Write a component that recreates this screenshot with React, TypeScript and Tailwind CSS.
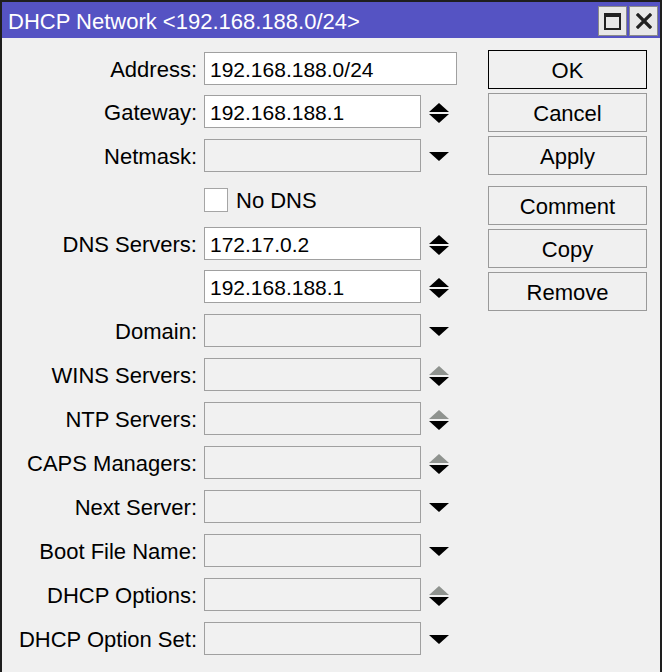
import React from "react";

type Arrow = "updown" | "down" | "greyup" | "none";

type Row =
  | { kind: "input"; label: string; value?: string; enabled: boolean; wide?: boolean; arrow: Arrow; h: number }
  | { kind: "check"; label: string; h: number };

const rows: Row[] = [
  { kind: "input", label: "Address:", value: "192.168.188.0/24", enabled: true, wide: true, arrow: "none", h: 43 },
  { kind: "input", label: "Gateway:", value: "192.168.188.1", enabled: true, arrow: "updown", h: 44 },
  { kind: "input", label: "Netmask:", enabled: false, arrow: "down", h: 44 },
  { kind: "check", label: "No DNS", h: 44 },
  { kind: "input", label: "DNS Servers:", value: "172.17.0.2", enabled: true, arrow: "updown", h: 43 },
  { kind: "input", label: "", value: "192.168.188.1", enabled: true, arrow: "updown", h: 44 },
  { kind: "input", label: "Domain:", enabled: false, arrow: "down", h: 44 },
  { kind: "input", label: "WINS Servers:", enabled: false, arrow: "greyup", h: 44 },
  { kind: "input", label: "NTP Servers:", enabled: false, arrow: "greyup", h: 44 },
  { kind: "input", label: "CAPS Managers:", enabled: false, arrow: "greyup", h: 44 },
  { kind: "input", label: "Next Server:", enabled: false, arrow: "down", h: 44 },
  { kind: "input", label: "Boot File Name:", enabled: false, arrow: "down", h: 44 },
  { kind: "input", label: "DHCP Options:", enabled: false, arrow: "greyup", h: 44 },
  { kind: "input", label: "DHCP Option Set:", enabled: false, arrow: "down", h: 44 },
];

function ArrowIcon({ type }: { type: Arrow }) {
  if (type === "none") return null;
  if (type === "down") {
    return (
      <svg width="20" height="9" viewBox="0 0 20 9" className="mt-[13px]">
        <polygon points="0,0 20,0 10,9" fill="#000" />
      </svg>
    );
  }
  const upColor = type === "greyup" ? "#8f938f" : "#000";
  return (
    <svg width="20" height="20" viewBox="0 0 20 20" className="mt-[8px]">
      <polygon points="10,0 20,9 0,9" fill={upColor} />
      <polygon points="0,11 20,11 10,20" fill="#000" />
    </svg>
  );
}

function FormRow({ row }: { row: Row }) {
  if (row.kind === "check") {
    return (
      <div className="flex items-start" style={{ height: row.h }}>
        <div className="w-[195px] shrink-0" />
        <div className="ml-[7px] flex items-center h-[33px]">
          <div className="w-[24px] h-[24px] bg-white border border-[#a5a5a5]" />
          <span className="ml-[8px] pt-[2px] text-[22px] leading-none text-black">{row.label}</span>
        </div>
      </div>
    );
  }
  return (
    <div className="flex items-start" style={{ height: row.h }}>
      <div className="w-[195px] shrink-0 h-[33px] pt-[2px] flex items-center justify-end text-[22px] leading-none text-black whitespace-nowrap">
        {row.label}
      </div>
      <div
        className={
          (row.wide ? "w-[253px] " : "w-[217px] ") +
          (row.enabled ? "bg-white " : "bg-[#f1f1f1] ") +
          "ml-[7px] h-[33px] pt-[2px] border border-[#a0a0a0] flex items-center pl-[5px] text-[21px] leading-none text-black"
        }
      >
        {row.value}
      </div>
      <div className="ml-[8px] w-[20px] h-[33px] flex justify-center items-start">
        <ArrowIcon type={row.arrow} />
      </div>
    </div>
  );
}

function Btn({ label, primary, mt }: { label: string; primary?: boolean; mt: string }) {
  return (
    <div
      className={
        (primary ? "border-black " : "border-[#9a9a9a] ") +
        mt +
        " w-[159px] h-[39px] pt-[2px] border bg-[#f0f0f0] flex items-center justify-center text-[22px] leading-none text-black"
      }
    >
      {label}
    </div>
  );
}

export default function App() {
  return (
    <div className="w-[664px] h-[672px] bg-white overflow-hidden" style={{ fontFamily: '"Liberation Sans", Arial, sans-serif' }}>
      <div className="w-[662px] h-[672px] border-l-2 border-t-2 border-r-2 border-[#1e1e1e] bg-[#f0f0f0] flex flex-col">
        <div className="h-[36px] bg-[#5553c3] flex items-center shrink-0">
          <span className="ml-[6px] pt-[4px] text-white text-[22px] leading-none">DHCP Network &lt;192.168.188.0/24&gt;</span>
          <div className="ml-auto mr-[2px] mt-[2px] flex gap-[2px]">
            <div className="w-[29px] h-[30px] bg-[#e8e8e8] border border-[#8a8a8a] flex items-center justify-center">
              <div className="w-[17px] h-[17px] border-2 border-t-[4px] border-[#222]" />
            </div>
            <div className="w-[29px] h-[30px] bg-[#e8e8e8] border border-[#8a8a8a] flex items-center justify-center">
              <svg width="16" height="16" viewBox="0 0 16 16">
                <path d="M2 2 L14 14 M14 2 L2 14" stroke="#222" strokeWidth="3.2" strokeLinecap="square" />
              </svg>
            </div>
          </div>
        </div>
        <div className="flex pt-[12px]">
          <div className="w-[486px] flex flex-col pt-[2px]">
            {rows.map((r, i) => (
              <FormRow key={i} row={r} />
            ))}
          </div>
          <div className="flex flex-col">
            <Btn label="OK" primary mt="" />
            <Btn label="Cancel" mt="mt-[4px]" />
            <Btn label="Apply" mt="mt-[4px]" />
            <Btn label="Comment" mt="mt-[11px]" />
            <Btn label="Copy" mt="mt-[4px]" />
            <Btn label="Remove" mt="mt-[4px]" />
          </div>
        </div>
      </div>
    </div>
  );
}
